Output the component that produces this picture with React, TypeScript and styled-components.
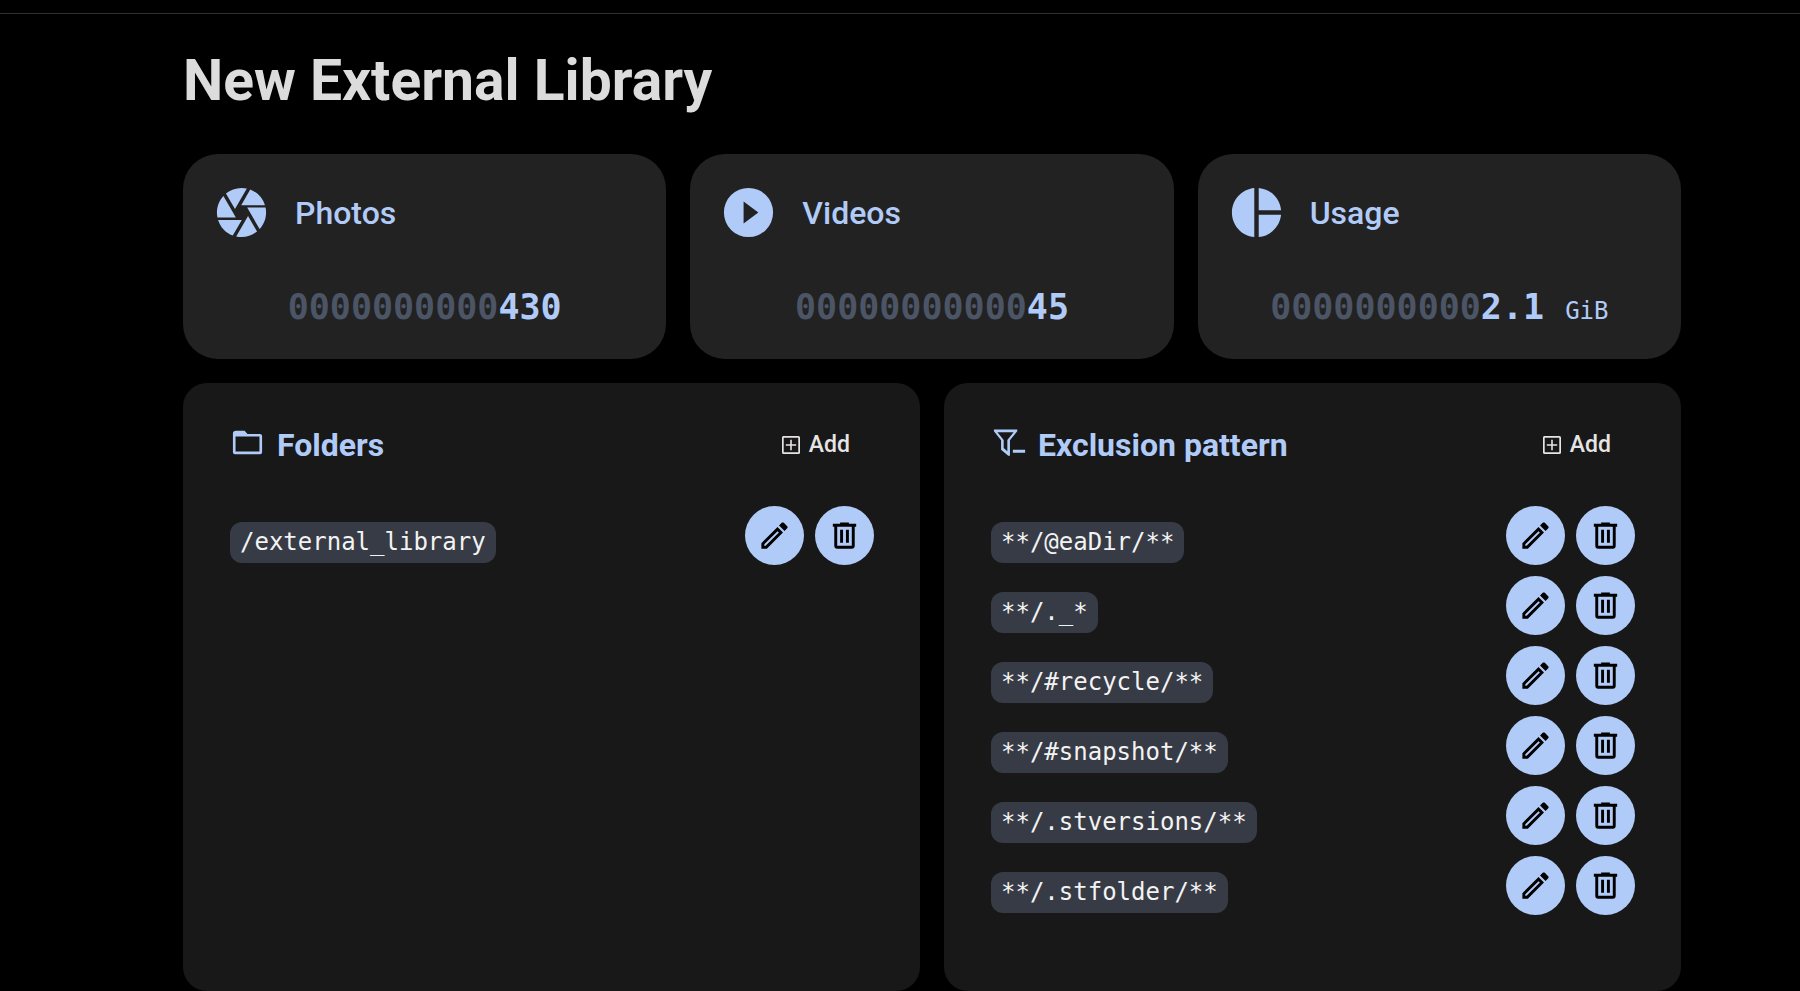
import React from "react";
import styled, { createGlobalStyle } from "styled-components";

const color = {
  page: "#000000",
  rule: "#303030",
  card: "#222222",
  panel: "#181818",
  accent: "#b1cbf8",
  heading: "#dcdcdc",
  text: "#e6e4e4",
  muted: "#4b5565",
  code: "#373b45",
  codeText: "#f3f3f3",
};

const sans = `Roboto, "Liberation Sans", sans-serif`;
const mono = `"DejaVu Sans Mono", "Liberation Mono", monospace`;

const GlobalStyle = createGlobalStyle`
  * {
    box-sizing: border-box;
  }
  body {
    margin: 0;
    background: ${color.page};
    color: ${color.text};
    font-family: ${sans};
  }
`;

const Page = styled.div`
  display: flex;
  flex-direction: column;
  min-height: 100vh;
`;

const TopBar = styled.header`
  height: 14px;
  border-bottom: 1px solid ${color.rule};
`;

const Main = styled.main`
  flex: 1;
  display: flex;
  flex-direction: column;
  gap: 24px;
  padding: 31px 119px 0 183px;
`;

const Title = styled.h1`
  margin: 0 0 13px;
  color: ${color.heading};
  font-size: 57px;
  line-height: 72px;
  font-weight: 700;
`;

const Stats = styled.section`
  display: grid;
  grid-template-columns: repeat(3, 1fr);
  gap: 24px;
`;

const Card = styled.article`
  display: flex;
  flex-direction: column;
  gap: 44px;
  padding: 29px 29px 31px;
  border-radius: 35px;
  background: ${color.card};
  color: ${color.accent};
`;

const CardHead = styled.div`
  display: flex;
  align-items: center;
  gap: 24px;
`;

const CardTitle = styled.h2`
  margin: 0;
  font-size: 32px;
  line-height: 40px;
  font-weight: 500;
`;

const Figure = styled.p`
  margin: 0;
  text-align: center;
  font-family: ${mono};
  font-size: 35px;
  line-height: 42px;
  font-weight: 700;
  white-space: pre;
`;

const Padding = styled.span`
  color: ${color.muted};
`;

const Unit = styled.span`
  font-size: 24px;
  line-height: 24px;
  font-weight: 400;
`;

const Panels = styled.div`
  flex: 1;
  display: grid;
  grid-template-columns: repeat(2, 1fr);
  gap: 24px;
`;

const Panel = styled.section`
  padding: 40px 46px 46px 47px;
  border-radius: 24px;
  background: ${color.panel};
`;

const PanelHead = styled.div`
  display: flex;
  align-items: center;
  justify-content: space-between;
  height: 44px;
  margin-bottom: 39px;
`;

const PanelTitle = styled.h2`
  display: flex;
  align-items: center;
  gap: 12px;
  margin: 0;
  color: ${color.accent};
  font-size: 32px;
  line-height: 40px;
  font-weight: 700;

  svg {
    margin-bottom: 6px;
  }
`;

const AddButton = styled.button`
  display: flex;
  align-items: center;
  gap: 6px;
  padding: 8px 24px;
  border: 0;
  background: none;
  color: ${color.text};
  font-family: ${sans};
  font-size: 23px;
  line-height: 28px;
  font-weight: 500;
  cursor: pointer;
`;

const Rows = styled.ul`
  display: flex;
  flex-direction: column;
  gap: 11px;
  margin: 0;
  padding: 0;
  list-style: none;
`;

const Row = styled.li`
  display: flex;
  align-items: flex-end;
  justify-content: space-between;
  gap: 12px;
`;

const Pattern = styled.code`
  margin-bottom: 2px;
  padding: 0 10px;
  border-radius: 12px;
  background: ${color.code};
  color: ${color.codeText};
  font-family: ${mono};
  font-size: 24px;
  line-height: 41px;
`;

const Actions = styled.div`
  display: flex;
  gap: 11px;
`;

const RoundButton = styled.button`
  display: grid;
  place-items: center;
  width: 59px;
  height: 59px;
  padding: 0;
  border: 0;
  border-radius: 50%;
  background: ${color.accent};
  color: #000000;
  cursor: pointer;
`;

const paths = {
  iris: "M13.73,15L9.83,21.76C10.53,21.91 11.25,22 12,22C14.4,22 16.6,21.15 18.32,19.75L14.66,13.4M2.46,15C3.38,17.92 5.61,20.26 8.45,21.34L12.12,15M8.54,12L4.64,5.25C3,7 2,9.39 2,12C2,12.68 2.07,13.35 2.2,14H9.69M21.8,10H14.31L14.6,10.5L19.36,18.75C21,16.97 22,14.6 22,12C22,11.31 21.93,10.64 21.8,10M21.54,9C20.62,6.07 18.39,3.74 15.55,2.66L11.88,9M9.4,10.5L14.17,2.24C13.47,2.09 12.75,2 12,2C9.6,2 7.4,2.84 5.68,4.25L9.34,10.6L9.4,10.5Z",
  play: "M10,16.5V7.5L16,12M12,2A10,10 0 0,0 2,12A10,10 0 0,0 12,22A10,10 0 0,0 22,12A10,10 0 0,0 12,2Z",
  pie: "M11.1,2V22C5.9,21.5 2,17.2 2,12C2,6.8 5.9,2.5 11.1,2M12.9,2V11.05H22C21.5,6.2 17.8,2.5 12.9,2M12.9,12.95V22C17.7,21.5 21.5,17.8 22,12.95H12.9Z",
  folder:
    "M20,18.2H3.8V7.9H20.2V18.2M20.5,6.1H12L10,4H4C2.89,4 2,4.7 2,5.6V18.6A1.4,1.4 0 0,0 3.4,20H20.6A1.4,1.4 0 0,0 22,18.6V7.5C22,6.7 21.4,6.1 20.5,6.1Z",
  filter:
    "M2,3H18V4.2L13,10.5V21H11.8L6.9,17V10.5L2,4.2ZM4.4,4.9L8.7,10.2V15.7L11.2,18V10.2L15.5,4.9ZM15,17H23.4V19H15Z",
  pencil:
    "M14.06,9L15,9.94L5.92,19H5V18.08L14.06,9M17.66,3C17.41,3 17.15,3.1 16.96,3.29L15.13,5.12L18.88,8.87L20.71,7.04C21.1,6.65 21.1,6 20.71,5.63L18.37,3.29C18.17,3.09 17.92,3 17.66,3M14.06,6.19L3,17.25V21H6.75L17.81,9.94L14.06,6.19Z",
  trash:
    "M9,3V4H4V6H5V19A2,2 0 0,0 7,21H17A2,2 0 0,0 19,19V6H20V4H15V3H9M7,6H17V19H7V6M9,8V17H11V8H9M13,8V17H15V8H13Z",
  plusBox:
    "M19.3,19.3V4.7H4.7V19.3H19.3M19.4,3A1.6,1.6 0 0,1 21,4.6V19.4A1.6,1.6 0 0,1 19.4,21H4.6A1.6,1.6 0 0,1 3,19.4V4.6C3,3.7 3.7,3 4.6,3H19.4M11.2,6.8H12.8V11.2H17.2V12.8H12.8V17.2H11.2V12.8H6.8V11.2H11.2Z",
};

type IconName = keyof typeof paths;

function Icon({ name, size }: { name: IconName; size: number }) {
  return (
    <svg width={size} height={size} viewBox="0 0 24 24" fill="currentColor" fillRule="evenodd" aria-hidden="true">
      <path d={paths[name]} />
    </svg>
  );
}

const DIGITS = 13;

type Stat = { title: string; icon: IconName; value: string; unit?: string };

const stats: Stat[] = [
  { title: "Photos", icon: "iris", value: "430" },
  { title: "Videos", icon: "play", value: "45" },
  { title: "Usage", icon: "pie", value: "2.1", unit: "GiB" },
];

function StatCard({ title, icon, value, unit }: Stat) {
  return (
    <Card>
      <CardHead>
        <Icon name={icon} size={59} />
        <CardTitle>{title}</CardTitle>
      </CardHead>
      <Figure>
        <Padding>{"0".repeat(DIGITS - value.length)}</Padding>
        {value}
        {unit && (
          <>
            {" "}
            <Unit>{unit}</Unit>
          </>
        )}
      </Figure>
    </Card>
  );
}

function ListPanel({ title, icon, items }: { title: string; icon: IconName; items: string[] }) {
  return (
    <Panel>
      <PanelHead>
        <PanelTitle>
          <Icon name={icon} size={35} />
          {title}
        </PanelTitle>
        <AddButton type="button">
          <Icon name="plusBox" size={24} />
          Add
        </AddButton>
      </PanelHead>
      <Rows>
        {items.map((item) => (
          <Row key={item}>
            <Pattern>{item}</Pattern>
            <Actions>
              <RoundButton type="button" aria-label={`Edit ${item}`}>
                <Icon name="pencil" size={35} />
              </RoundButton>
              <RoundButton type="button" aria-label={`Delete ${item}`}>
                <Icon name="trash" size={35} />
              </RoundButton>
            </Actions>
          </Row>
        ))}
      </Rows>
    </Panel>
  );
}

const folders = ["/external_library"];

const exclusions = [
  "**/@eaDir/**",
  "**/._*",
  "**/#recycle/**",
  "**/#snapshot/**",
  "**/.stversions/**",
  "**/.stfolder/**",
];

export default function App() {
  return (
    <Page>
      <GlobalStyle />
      <TopBar />
      <Main>
        <Title>New External Library</Title>
        <Stats>
          {stats.map((stat) => (
            <StatCard key={stat.title} {...stat} />
          ))}
        </Stats>
        <Panels>
          <ListPanel title="Folders" icon="folder" items={folders} />
          <ListPanel title="Exclusion pattern" icon="filter" items={exclusions} />
        </Panels>
      </Main>
    </Page>
  );
}
